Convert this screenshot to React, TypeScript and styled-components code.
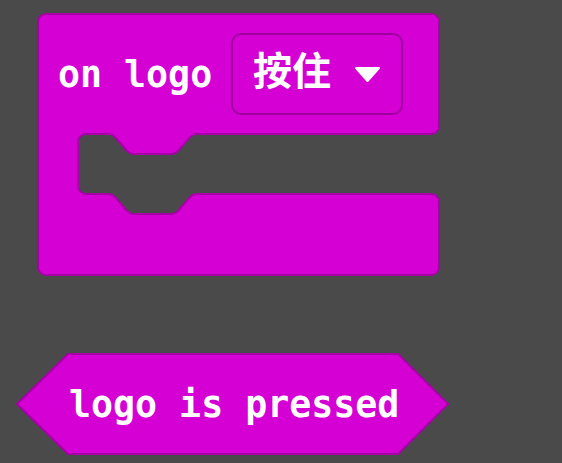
import React from "react";
import styled, { createGlobalStyle } from "styled-components";

const GlobalStyle = createGlobalStyle`
  html, body {
    margin: 0;
    padding: 0;
    background: #4b4a4b;
  }
  body {
    font-family: "DejaVu Sans Mono", "Liberation Mono", monospace;
  }
`;

const Workspace = styled.div`
  position: relative;
  width: 562px;
  height: 463px;
  overflow: hidden;
  background: #4b4a4b;
`;

const BlockSvg = styled.svg<{ $x: number; $y: number }>`
  position: absolute;
  left: ${(p) => p.$x}px;
  top: ${(p) => p.$y}px;
  overflow: visible;
`;

const Shape = styled.path`
  fill: #d400d4;
  stroke: #a800a8;
  stroke-width: 2;
  stroke-linejoin: round;
`;

const DropRect = styled.rect`
  fill: #d400d4;
  stroke: #a000a0;
  stroke-width: 2;
`;

const Label = styled.text`
  fill: #ffffff;
  font-family: "DejaVu Sans Mono", "Liberation Mono", monospace;
  font-weight: 700;
  font-size: 36.6px;
`;

const CjkLabel = styled.text`
  fill: #ffffff;
  font-family: "Noto Sans CJK SC", "Noto Sans CJK JP", sans-serif;
  font-weight: 700;
  font-size: 39px;
`;

const Arrow = styled.path`
  fill: #ffffff;
  stroke: #ffffff;
  stroke-width: 2;
  stroke-linejoin: round;
`;

const eventPath =
  "M 38 22 a8 8 0 0 1 8 -8 H 431 a8 8 0 0 1 8 8 V 126 a8 8 0 0 1 -8 8 H 196 " +
  "c -3 0 -4 1 -6 3 L 178 151 c -2 2 -3 3 -6 3 H 133 c -3 0 -4 -1 -6 -3 L 115 137 c -2 -2 -3 -3 -6 -3 " +
  "H 86 a8 8 0 0 0 -8 8 V 186 a8 8 0 0 0 8 8 H 109 c 3 0 4 1 6 3 L 127 211 c 2 2 3 3 6 3 H 172 " +
  "c 3 0 4 -1 6 -3 L 190 197 c 2 -2 3 -3 6 -3 H 431 a8 8 0 0 1 8 8 V 267 a8 8 0 0 1 -8 8 H 46 a8 8 0 0 1 -8 -8 Z";

const hexPath = "M 17 404 L 68 354 H 398 L 448 404 L 398 454 H 68 Z";

export default function App() {
  return (
    <>
      <GlobalStyle />
      <Workspace>
        <BlockSvg $x={34} $y={10} width={410} height={270} viewBox="34 10 410 270">
          <Shape d={eventPath} />
          <Label x={58} y={87}>on logo</Label>
          <DropRect x={232} y={34} width={170} height={80} rx={9} ry={9} />
          <CjkLabel x={253} y={85}>按住</CjkLabel>
          <Arrow d="M 356 68 H 379 L 367.5 81 Z" />
        </BlockSvg>
        <BlockSvg $x={14} $y={350} width={438} height={108} viewBox="14 350 438 108">
          <Shape d={hexPath} />
          <Label x={69} y={417}>logo is pressed</Label>
        </BlockSvg>
      </Workspace>
    </>
  );
}
